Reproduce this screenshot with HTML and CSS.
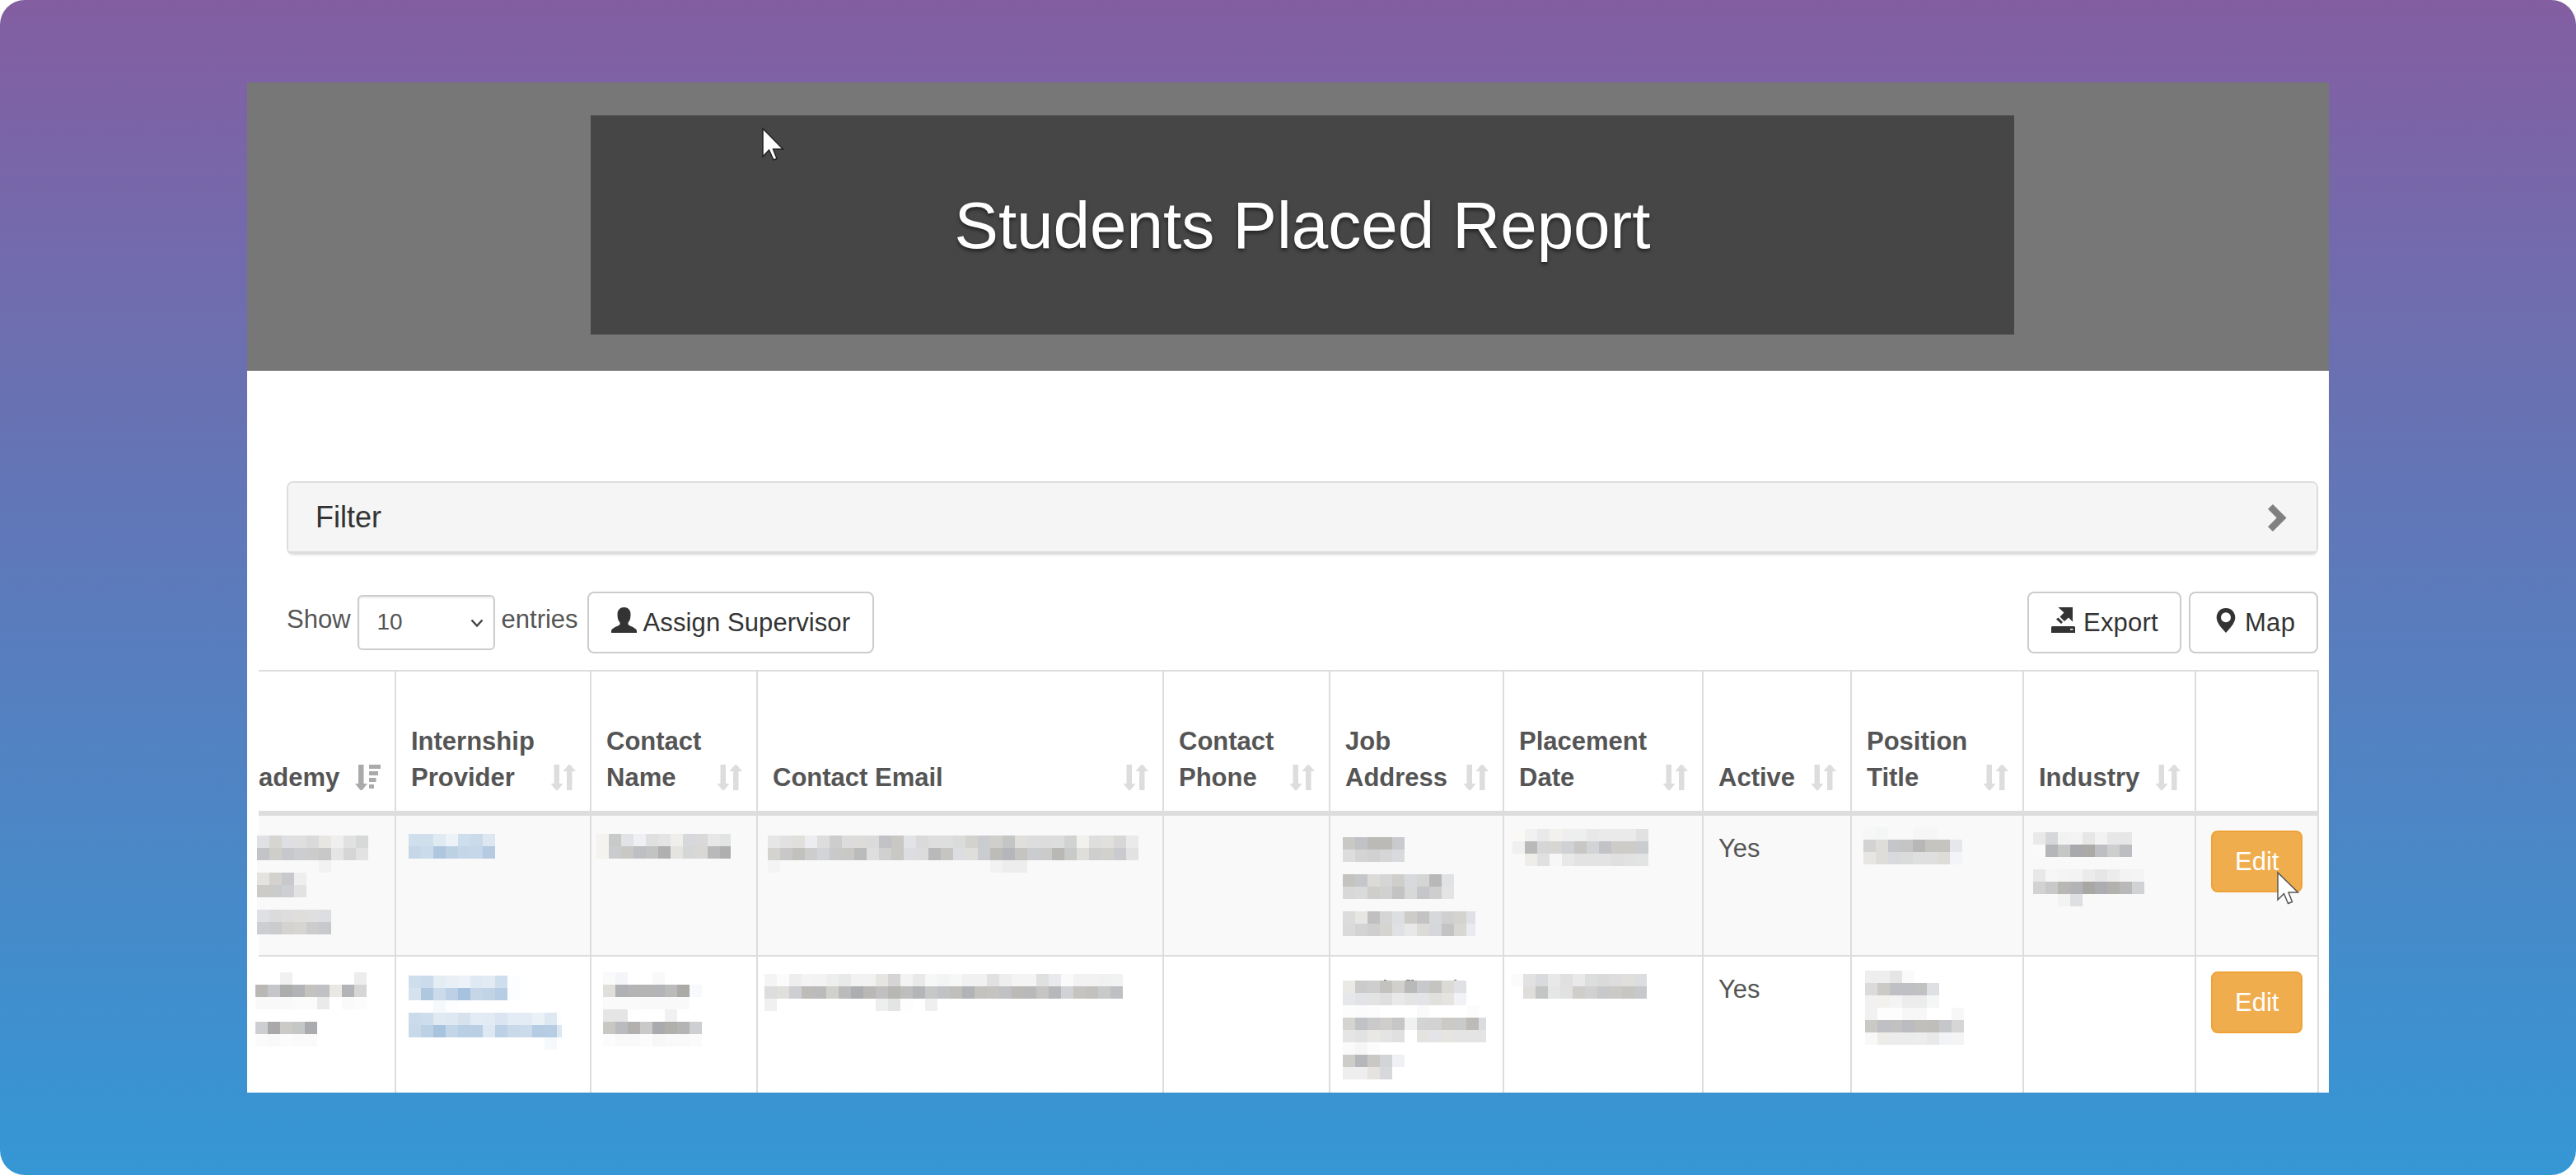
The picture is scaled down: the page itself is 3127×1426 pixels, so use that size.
FILE: index.html
```html
<!DOCTYPE html>
<html lang="en">
<head>
    <meta charset="UTF-8">
    <meta name="viewport" content="width=device-width, initial-scale=1.0">
    <title>Students Placed Report</title>
    <link rel="stylesheet" href="styles.css">
</head>
<body>
    <!-- Shared icons -->
    <svg class="icon-defs" width="0" height="0">
        <symbol id="icon-sort" viewBox="0 0 30 31">
            <path d="M4 0h6.5v23H15L9 30.5q-1.5 1-3 0L0 23h4z"/>
            <path d="M19.500 31h6.500V8h4.500L24 .5q-1.300-1-2.600 0L15 8h4.500z"/>
        </symbol>
        <symbol id="icon-sort-desc" viewBox="0 0 31 31">
            <path d="M4 0h6.500v23H15L9 30.500q-1.500 1-3 0L0 23h4z"/>
            <path d="M17 0h14v5H17zM17 8h11v5H17zM17 16h8.500v5H17zM17 24h6v5h-6z"/>
        </symbol>
    </svg>

    <div class="backdrop">
        <div class="page">
            <!-- Header Section -->
            <header>
                <div class="title-box">
                    <h1>Students Placed Report</h1>
                </div>
            </header>

            <main>
                <!-- Filter -->
                <div class="panel">
                    <div class="panel-heading">
                        <span>Filter</span>
                        <svg class="chevron" viewBox="0 0 23 33"><path d="M6 0L22.500 16.500 6 33 0 27.200 10.700 16.500 0 5.800z"/></svg>
                    </div>
                </div>

                <!-- Toolbar -->
                <div class="toolbar">
                    <div class="toolbar-left">
                        <span class="length-label">Show</span>
                        <div class="select">
                            <span>10</span>
                            <svg class="caret" viewBox="0 0 16 11"><path d="M1.500 1.500L8 8.500l6.500-7"/></svg>
                        </div>
                        <span class="length-label">entries</span>
                        <a class="btn btn-assign">
                            <svg class="icon" viewBox="0 0 31 31"><path d="M15.500 0C20 0 23.500 3 23.500 8.500c0 5-1 8-3 10v2.500c2 2 10.500 4 10.500 8v2H0v-2c0-4 8.500-6 10.500-8v-2.500c-2-2-3-5-3-10C7.500 3 11 0 15.500 0z"/></svg>
                            <span>Assign Supervisor</span>
                        </a>
                    </div>
                    <div class="toolbar-right">
                        <a class="btn btn-export">
                            <svg class="icon" viewBox="0 0 31 31"><path d="M8.500 0H26v17.500l-5-5-5 4.500-5.500-5.500 5-5z"/><path d="M8.500 12.500l5.500 5.500-2 2-6-5.500z"/><path fill-rule="evenodd" d="M1.500 23h26q1.500 0 1.500 1.500V31H0v-6.500Q0 23 1.500 23zM23 26v1.500h3.500V26z"/></svg>
                            <span>Export</span>
                        </a>
                        <a class="btn btn-map">
                            <svg class="icon" viewBox="0 0 31 31"><path fill-rule="evenodd" d="M16 1c6.500 0 11.300 4.800 11.300 11.500C27.300 19 21 25.500 16 31 11 25.500 4.700 19 4.700 12.500 4.700 5.800 9.500 1 16 1zm0 5.300a6 6 0 1 0 0 12 6 6 0 0 0 0-12z"/></svg>
                            <span>Map</span>
                        </a>
                    </div>
                </div>

                <!-- Students table -->
                <table>
                    <colgroup>
                        <col class="col-academy"><col class="col-provider"><col class="col-name"><col class="col-email">
                        <col class="col-phone"><col class="col-address"><col class="col-date"><col class="col-active">
                        <col class="col-position"><col class="col-industry"><col class="col-edit">
                    </colgroup>
                    <thead>
                        <tr>
                            <th class="first"><div class="th-inner"><span>ademy</span><svg class="sort sorted"><use href="#icon-sort-desc"/></svg></div></th>
                            <th><div class="th-inner"><span>Internship<br>Provider</span><svg class="sort"><use href="#icon-sort"/></svg></div></th>
                            <th><div class="th-inner"><span>Contact<br>Name</span><svg class="sort"><use href="#icon-sort"/></svg></div></th>
                            <th><div class="th-inner"><span>Contact Email</span><svg class="sort"><use href="#icon-sort"/></svg></div></th>
                            <th><div class="th-inner"><span>Contact<br>Phone</span><svg class="sort"><use href="#icon-sort"/></svg></div></th>
                            <th><div class="th-inner"><span>Job<br>Address</span><svg class="sort"><use href="#icon-sort"/></svg></div></th>
                            <th><div class="th-inner"><span>Placement<br>Date</span><svg class="sort"><use href="#icon-sort"/></svg></div></th>
                            <th><div class="th-inner"><span>Active</span><svg class="sort"><use href="#icon-sort"/></svg></div></th>
                            <th><div class="th-inner"><span>Position<br>Title</span><svg class="sort"><use href="#icon-sort"/></svg></div></th>
                            <th><div class="th-inner"><span>Industry</span><svg class="sort"><use href="#icon-sort"/></svg></div></th>
                            <th></th>
                        </tr>
                    </thead>
                    <tbody>
                        <tr class="odd">
                            <td class="masked" data-mask="academy1"></td>
                            <td class="masked" data-mask="provider1"></td>
                            <td class="masked" data-mask="name1"></td>
                            <td class="masked" data-mask="email1"></td>
                            <td></td>
                            <td class="masked" data-mask="address1"></td>
                            <td class="masked" data-mask="date1"></td>
                            <td>Yes</td>
                            <td class="masked" data-mask="position1"></td>
                            <td class="masked" data-mask="industry1"></td>
                            <td><a class="btn btn-warning">Edit</a></td>
                        </tr>
                        <tr>
                            <td class="masked" data-mask="academy2"></td>
                            <td class="masked" data-mask="provider2"></td>
                            <td class="masked" data-mask="name2"></td>
                            <td class="masked" data-mask="email2"></td>
                            <td></td>
                            <td class="masked" data-mask="address2"></td>
                            <td class="masked" data-mask="date2"></td>
                            <td>Yes</td>
                            <td class="masked" data-mask="position2"></td>
                            <td></td>
                            <td><a class="btn btn-warning">Edit</a></td>
                        </tr>
                    </tbody>
                </table>
            </main>

            <!-- Mouse pointers -->
            <svg class="pointer pointer-header" viewBox="-1 -2 28 42"><path d="M0 0v34l7.500-8 5.500 12 4-1.500L12.500 25H24.500z"/></svg>
            <svg class="pointer pointer-edit" viewBox="-1 -2 28 42"><path d="M0 0v33l7.500-7.500L12.500 37.500l5-2L13 24h11.500z"/></svg>
        </div>
    </div>

    <script src="masks.js"></script>
</body>
</html>
```

FILE: styles.css
```css
:root {
    --header-color: #777777;
    --title-color: #464646;
    --border-color: #dddddd;
    --text-color: #555555;
    --dark-text: #333333;
    --warning-color: #f0ad4e;
    --warning-border: #eea236;
}

* {
    margin: 0;
    padding: 0;
    box-sizing: border-box;
}

body {
    background-color: #ffffff;
    color: var(--text-color);
    font-family: "Liberation Sans", Arial, sans-serif;
    font-size: 31px;
    line-height: 44px;
}

svg {
    display: block;
    fill: currentColor;
}

.icon-defs {
    position: absolute;
}

.backdrop {
    width: 3127px;
    height: 1426px;
    padding: 100px 300px;
    border-radius: 30px;
    background: linear-gradient(#835ea1, #3597d5);
}

.page {
    position: relative;
    width: 2527px;
    height: 1226px;
    background-color: #ffffff;
    overflow: hidden;
}

/* Header */
header {
    height: 350px;
    padding-top: 40px;
    background-color: var(--header-color);
}

.title-box {
    width: 1728px;
    height: 266px;
    margin-left: 417px;
    padding-top: 1px;
    display: flex;
    align-items: center;
    justify-content: center;
    background-color: var(--title-color);
}

h1 {
    color: #ffffff;
    font-size: 80px;
    font-weight: normal;
    line-height: 88px;
    text-shadow: 0 3px 4px rgba(0, 0, 0, 0.5);
}

main {
    padding: 134px 12px 0 14px;
}

/* Filter panel */
.panel {
    height: 89px;
    margin-left: 34px;
    margin-right: 1px;
    border: 2px solid var(--border-color);
    border-radius: 8px;
    box-shadow: 0 2px 2px rgba(0, 0, 0, 0.05);
}

.panel-heading {
    height: 85px;
    padding: 0 36px 0 33px;
    display: flex;
    align-items: center;
    justify-content: space-between;
    border-bottom: 2px solid var(--border-color);
    border-radius: 6px 6px 0 0;
    background-color: #f5f5f5;
    color: var(--dark-text);
    font-size: 36px;
    line-height: 40px;
}

.chevron {
    width: 23px;
    height: 33px;
    margin-top: 2px;
    color: #808080;
}

/* Toolbar */
.toolbar {
    height: 75px;
    margin: 45px 1px 20px 34px;
    display: flex;
    justify-content: space-between;
}

.toolbar-left,
.toolbar-right {
    display: flex;
    align-items: flex-start;
}

.toolbar-right {
    gap: 9px;
}

.length-label {
    margin-top: 12px;
}

.select {
    width: 167px;
    height: 67px;
    margin: 4px 8px 0;
    padding: 0 12px 2px 22px;
    display: flex;
    align-items: center;
    justify-content: space-between;
    border: 2px solid #cccccc;
    border-radius: 6px;
    box-shadow: inset 0 2px 2px rgba(0, 0, 0, 0.075);
    font-size: 28px;
}

.caret {
    width: 16px;
    height: 11px;
    margin-top: 3px;
    fill: none;
    stroke: #444444;
    stroke-width: 2.5;
}

.btn {
    height: 75px;
    padding: 14px 27px;
    display: inline-flex;
    gap: 8px;
    border: 2px solid #cccccc;
    border-radius: 8px;
    color: var(--dark-text);
    line-height: 43px;
    white-space: nowrap;
}

.btn-assign {
    width: 348px;
    margin-left: 11px;
    letter-spacing: 0.1px;
}

.btn-export {
    width: 187px;
    letter-spacing: 0.2px;
}

.btn-map {
    width: 157px;
    letter-spacing: 0.3px;
}

.btn-warning {
    width: 111px;
    background-color: var(--warning-color);
    border-color: var(--warning-border);
    color: #ffffff;
}

.icon {
    width: 31px;
    height: 31px;
    margin-top: 3px;
    flex: none;
}

/* Table */
table {
    width: 2501px;
    table-layout: fixed;
    border-spacing: 0;
}

.col-academy { width: 167px; }
.col-provider { width: 237px; }
.col-name { width: 202px; }
.col-email { width: 493px; }
.col-phone { width: 202px; }
.col-address { width: 211px; }
.col-date { width: 242px; }
.col-active { width: 180px; }
.col-position { width: 209px; }
.col-industry { width: 209px; }
.col-edit { width: 149px; }

th {
    height: 177px;
    padding: 0 17px 18px 18px;
    border-top: 2px solid var(--border-color);
    border-right: 2px solid var(--border-color);
    border-bottom: 6px solid var(--border-color);
    text-align: left;
    vertical-align: bottom;
    white-space: nowrap;
}

th.first {
    padding-left: 0;
}

.th-inner {
    display: flex;
    align-items: flex-end;
    justify-content: space-between;
}

.sort {
    width: 31px;
    height: 31px;
    margin-bottom: 7px;
    flex: none;
    color: #dddddd;
}

.sort.sorted {
    color: #aaaaaa;
}

td {
    height: 171px;
    padding: 18px 16px 0 18px;
    border-right: 2px solid var(--border-color);
    border-bottom: 2px solid var(--border-color);
    vertical-align: top;
}

td.masked {
    padding: 0;
}

.odd td {
    background-color: #f9f9f9;
}

/* Mouse pointers sit above the page */
.pointer {
    position: absolute;
    width: 28px;
    height: 42px;
    fill: #ffffff;
    stroke: #222222;
    stroke-width: 1.5;
}

.pointer-header {
    left: 625px;
    top: 54px;
}

.pointer-edit {
    left: 2464px;
    top: 957px;
    stroke: #555555;
}
```

FILE: masks.js
```javascript
// Pixelated blocks covering personal data.
// Each tile is a brightness in hex plus an optional tint: w warm, c cool, g green, b link blue.
const TILE = 15;

const masks = {
    academy1: { x: -2, y: 24, rows: [
        'e0c d6w dec df da e7w ef e1 d7g',
        'c3c cfw c7c ccc cc c8 e5 d6 e2',
        'f9 .. .. .. .. f2',
        'e4w d3w c8c ee',
        'ccw cag cec e2',
        'f9',
        'dfc db dd dfw df ddc',
        'cdc cbc d4w d6w cc c8c'
    ] },
    provider1: { x: 15, y: 22, rows: [
        'd0b d1b e0b ecb cfb cab dcb',
        'c5b cbb aeb bdb c4b c5b b4b'
    ] },
    name1: { x: 6, y: 22, width: 163, rows: [
        'f4w c8g e2c efc e0 e4 efw d7c d9 e7 e2g',
        'f4w cac c9w bec c2g b0 e5w d5g d9w b9 af'
    ] },
    email1: { x: 12, y: 24, rows: [
        'e6 e1 e0w ecc dd cd dc ddw db c1c c9w e2c da de de dag d3w cbc d0w c4g e0w dd dc dd d1g f2w de e1w d7 ea',
        'd4w c8 c2w cd d3c c9 c9w bag de d0 c9w dcc dc b9 c6w dcc dfw cbc bdw b5c c5w cbc cb b9w c8g dfw cf d2w cac e2',
        'f4 .. .. .. .. .. .. .. .. .. .. .. .. .. .. .. .. .. f2 ed ed'
    ] },
    address1: { x: 15, y: 26, width: 161, rows: [
        'c9w c1c bbw bbw c9c',
        'dd d4 d1 d6 d9c',
        '',
        'c4w c5c dcw d6 cfw d8c d5 b8 e1c',
        'd8 d9g cfw d1 c3 d7g c5c ce e4',
        '',
        'dc e7w c0 d5 ddc cdw c3 d7c d0 d4w e0c',
        'da d3 cf d5w e0c e8 dcw d6c c4 d8w eac'
    ] },
    date1: { x: 10, y: 16, rows: [
        'faw f1 e9 f2w ee edg e8 ea ea ea e1',
        'f0 b9 d6 d7w d0c c8w d2c c2c cdw cdw cbc',
        '.. eew e0 f7 e8 e3 e3 e3 e0 e2 e2g'
    ] },
    position1: { x: 14, y: 14, rows: [
        'f7 f4g .. .. f6 f6',
        'd3 dew c5c c5 b7 c5w c5w e6c',
        'e7w dew d9c dag df df ddw f3c'
    ] },
    industry1: { x: 11, y: 20, rows: [
        'e9 d6c f2 f3 e6 f2 e7 e6',
        'fa b5c c5g a8c abw bec ce bdc',
        '',
        'e8 f6 f3g f3 eb e6 ec f3 f4',
        'd2 c9 b8w b2c a8w acc b2w b9 d1c',
        '.. .. f3 dec'
    ] },
    academy2: { x: -4, y: 19, rows: [
        '.. .. f1 .. .. .. .. .. ed',
        'b9w c5c ad b2c c3w c0c e9w b3c d6',
        'f9 f9 f9 fb fb ea .. fa fc',
        '',
        'cdc a9 cbw c5g aac',
        'fb f9 fc fa fa'
    ] },
    provider2: { x: 15, y: 23, width: 186, rows: [
        'cfb cbb e4b e8b ecb dfb e2b cfb fcb',
        'd6b afb cbb bcb a7b c4b c0b b6b fcb',
        '.. .. f6b fcb',
        'cbb cdb e0b ddb d6b e3b e2b dab e3b e3b eab ddb fcb',
        'c8b bdb a8b c3b b9b bab ddb bcb c8b cbb b5b b6b dcb',
        '.. .. .. .. .. .. .. .. .. .. .. f6b'
    ] },
    name2: { x: 14, y: 19, rows: [
        'fa f4c .. .. f9',
        'e0w b0c b4 b4 b3c bb abw f8c',
        'fa fa fa f9 f9 f9 f9',
        'e5 e5 .. .. .. f1',
        'c8w bac b2w c9 a9c b0w b4 cec',
        'fc f9 f9 fc f7 f9 f9 fb'
    ] },
    email2: { x: 8, y: 21, rows: [
        'f4 fb ee f4 f3 ee e8g f2 f2 e6w d5 f3 e9 f6g f4 f6g f1 f1 e1 ee f4 f4 e0 e9c fa f2 f2 f1 f1g',
        'dd e0w cec bdw bb d1w bb adc b9w c0 b8w be b4c c7 c1c c0w b2c c3w c5w c0c bbw b9 c6w b7c d1c c5w c2w c8g bfc',
        'f0 .. .. .. .. .. .. .. .. ee e3g fd .. ef'
    ] },
    address2: { x: 15, y: 29, width: 174, peek: [[50, 3], [77, 5], [83, 3], [135, 3]], rows: [
        'eaw cb ce c3w d1w b9 c8c c5w dbw e0c',
        'e6c e2c e3 df e9 e4 e3c e1w e5w f1c',
        'fc fb fc .. .. .. fa .. .. .. fc',
        'd5w c1c ca cfw c6 f0g d3 d2 cbw c9g bcw dbc',
        'e5 e1g e9w e4 e0 .. e4w e3c e6w e4 e4 e4',
        'fa f6 fc',
        'cdw b6c c9w d3c f0c',
        'ee ee e4w d7c'
    ] },
    date2: { x: 8, y: 21, rows: [
        'fb e2 d9c e8 e0 e9 dcg da dd e0w dcc',
        '.. dfw c3g e5g e1 cfw d1 c8c cbw c7w c7c'
    ] },
    position2: { x: 16, y: 17, rows: [
        'ee ee e5 fa',
        'db cbw bfc bfc c1 dfc',
        'f1 f2w f4 ec ec f5g',
        'f1 fd fd f7 f7 .. .. f7',
        'caw bfc c1 bbc c0w bfw c6c d6',
        'f8 edw ec ebg ed e9 f2c f4'
    ] }
};

function tileColor(tile) {
    const v = parseInt(tile.slice(0, 2), 16);
    const rest = 255 - v;
    switch (tile[2]) {
        case 'w': return `rgb(${v + 1}, ${v - 1}, ${v - 4})`;
        case 'c': return `rgb(${v - 1}, ${v + 1}, ${v + 4})`;
        case 'g': return `rgb(${v - 1}, ${v + 2}, ${v})`;
        case 'b': return `rgb(${v}, ${Math.round(v + rest * 0.31)}, ${Math.round(v + rest * 0.61)})`;
        default: return `rgb(${v}, ${v}, ${v})`;
    }
}

function rect(x, y, width, height, fill) {
    return `<rect x="${x}" y="${y}" width="${width}" height="${height}" fill="${fill}"/>`;
}

document.querySelectorAll('[data-mask]').forEach(cell => {
    const mask = masks[cell.dataset.mask];
    const rows = mask.rows.map(row => row ? row.split(' ') : []);
    const width = mask.width || Math.max(...rows.map(row => row.length)) * TILE;
    const height = rows.length * TILE;
    let shapes = '';

    rows.forEach((row, r) => {
        row.forEach((tile, c) => {
            if (tile !== '..') {
                const w = Math.min(TILE, width - c * TILE);
                shapes += rect(c * TILE, r * TILE, w, TILE, tileColor(tile));
            }
        });
    });

    // tops of letters left showing above the block
    (mask.peek || []).forEach(([x, w]) => {
        shapes += rect(x, -1, w, 1, '#777777');
    });

    cell.innerHTML = `<svg width="${width}" height="${height}" overflow="visible" shape-rendering="crispEdges" style="margin: ${mask.y}px 0 0 ${mask.x}px">${shapes}</svg>`;
});
```
